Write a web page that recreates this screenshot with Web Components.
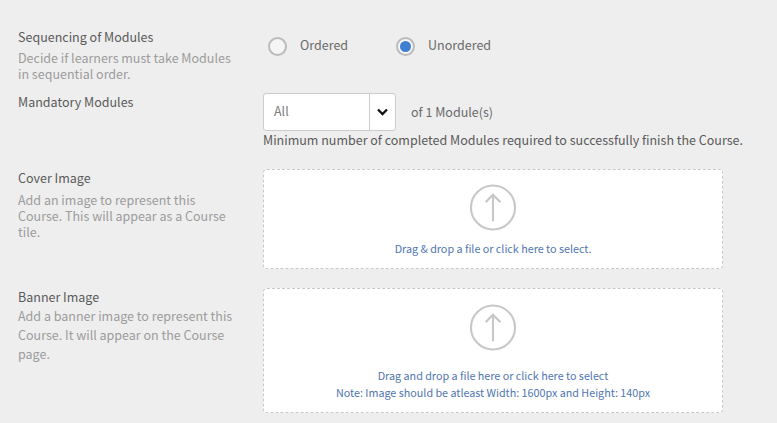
<!DOCTYPE html>
<html>
<head>
<meta charset="utf-8">
<style>
    html, body {
        margin: 0;
        height: 100%;
        background: #eeeeee;
        overflow: hidden;
    }
    body {
        font-family: "Noto Sans CJK SC", "Open Sans", sans-serif;
        font-size: 12.5px;
        color: #555;
    }
    .page {
        display: flex;
        flex-direction: column;
        padding-left: 18px;
    }
    .radios {
        display: flex;
        gap: 48px;
        padding: 8px 0 0 5px;
    }
</style>
</head>
<body>

<template id="row-template">
    <style>
        :host {
            display: grid;
            grid-template-columns: 245px 460px;
        }
        .label {
            font-size: 12.5px;
            line-height: 16px;
            padding-top: 1px;
            color: #5a5a5a;
        }
        .desc {
            font-size: 12.5px;
            line-height: var(--desc-line, 16px);
            margin-top: var(--desc-gap, 6px);
            color: #9c9c9c;
            width: 216px;
        }
    </style>
    <div>
        <div class="label"><slot name="label"></slot></div>
        <div class="desc"><slot name="desc"></slot></div>
    </div>
    <div><slot></slot></div>
</template>

<template id="radio-template">
    <style>
        :host {
            display: flex;
            align-items: flex-start;
            gap: 13px;
            font-size: 12.5px;
            color: #6a6a6a;
            line-height: 18px;
        }
        .dot {
            width: 19px;
            height: 19px;
            box-sizing: border-box;
            border: 2px solid #bbb;
            border-radius: 50%;
            background: #f5f5f5;
            display: flex;
            align-items: center;
            justify-content: center;
            margin-top: 1px;
        }
        :host([checked]) .dot::after {
            content: "";
            width: 11px;
            height: 11px;
            border-radius: 50%;
            background: #3d7fd0;
        }
    </style>
    <span class="dot"></span>
    <span><slot></slot></span>
</template>

<template id="count-template">
    <style>
        :host {
            display: flex;
            flex-direction: column;
        }
        .top {
            display: flex;
            align-items: center;
        }
        .select {
            width: 133px;
            height: 38px;
            box-sizing: border-box;
            background: #fff;
            border: 1px solid #ccc;
            border-radius: 3px;
            display: flex;
            font-size: 12.5px;
            color: #808080;
        }
        .value {
            flex: 1;
            padding-left: 10px;
            line-height: 34px;
        }
        .arrow {
            width: 25px;
            border-left: 1px solid #ccc;
            display: flex;
            align-items: center;
            justify-content: center;
        }
        .of {
            margin: 0 0 2px 15px;
            color: #6a6a6a;
        }
        .hint {
            line-height: 18px;
            color: #5a5a5a;
            white-space: nowrap;
        }
    </style>
    <div class="top">
        <div class="select">
            <div class="value"><slot name="value"></slot></div>
            <div class="arrow">
                <svg width="11" height="8" viewBox="0 0 11 8"><path d="M1 1.5 L5.5 6 L10 1.5" fill="none" stroke="#111" stroke-width="2.3"/></svg>
            </div>
        </div>
        <span class="of"><slot name="of"></slot></span>
    </div>
    <div class="hint"><slot name="hint"></slot></div>
</template>

<template id="upload-template">
    <style>
        :host {
            display: flex;
            flex-direction: column;
            align-items: center;
            box-sizing: border-box;
            width: 460px;
            background: #fff;
            border: 1px dashed #c8c8c8;
            border-radius: 4px;
            font-size: 10.75px;
            line-height: 17px;
            color: #4f76b0;
            text-align: center;
            padding-top: 14px;
        }
        svg { display: block; margin-bottom: 9px; }
    </style>
    <svg width="47" height="47" viewBox="0 0 48 48" style="transform:translateX(-0.5px)">
        <circle cx="24" cy="24" r="22.5" fill="none" stroke="#c8c8c8" stroke-width="2.2"/>
        <path d="M24 38 V11 M16.5 18.5 L24 11 L31.5 18.5" fill="none" stroke="#c8c8c8" stroke-width="2.2"/>
    </svg>
    <slot></slot>
</template>

<div class="page">
    <form-row style="margin-top:28px;height:65px;--desc-gap:5px">
        <span slot="label">Sequencing of Modules</span>
        <span slot="desc">Decide if learners must take Modules in sequential order.</span>
        <div class="radios">
            <radio-option>Ordered</radio-option>
            <radio-option checked>Unordered</radio-option>
        </div>
    </form-row>
    <form-row style="height:76px">
        <span slot="label">Mandatory Modules</span>
        <module-count>
            <span slot="value">All</span>
            <span slot="of">of 1 Module(s)</span>
            <span slot="hint">Minimum number of completed Modules required to successfully finish the Course.</span>
        </module-count>
    </form-row>
    <form-row style="height:119px">
        <span slot="label">Cover Image</span>
        <span slot="desc">Add an image to represent this Course. This will appear as a Course tile.</span>
        <upload-box style="height:100px">Drag &amp; drop a file or click here to select.</upload-box>
    </form-row>
    <form-row style="--desc-line:19px;--desc-gap:1px">
        <span slot="label">Banner Image</span>
        <span slot="desc">Add a banner image to represent this Course. It will appear on the Course page.</span>
        <upload-box style="height:125px;padding-top:15px">
            <div style="margin-top:7px">Drag and drop a file here or click here to select<br>Note: Image should be atleast Width: 1600px and Height: 140px</div>
        </upload-box>
    </form-row>
</div>

<script>
    function define(name, templateId) {
        const template = document.getElementById(templateId);
        customElements.define(name, class extends HTMLElement {
            constructor() {
                super();
                this.attachShadow({ mode: "open" });
                this.shadowRoot.appendChild(template.content.cloneNode(true));
            }
        });
    }
    define("form-row", "row-template");
    define("radio-option", "radio-template");
    define("module-count", "count-template");
    define("upload-box", "upload-template");
</script>
</body>
</html>
